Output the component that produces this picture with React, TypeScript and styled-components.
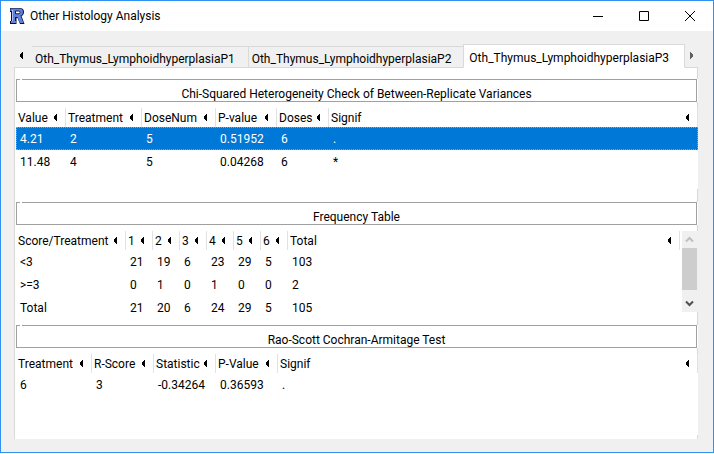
import React from "react";
import styled, { createGlobalStyle } from "styled-components";

const GlobalStyle = createGlobalStyle`
  *, *::before, *::after { box-sizing: border-box; }
  body { margin: 0; background: #ffffff; }
  button {
    font: inherit;
    color: inherit;
    background: none;
    border: 0;
    padding: 0;
    margin: 0;
  }
`;

const Window = styled.main`
  display: flex;
  flex-direction: column;
  min-height: calc(100vh - 1px);
  border: 1px solid #2f91f0;
  background: #f0f0f0;
  color: #000000;
  font-family: Roboto, "Noto Sans", sans-serif;
  font-size: 12px;
  line-height: 16px;
`;

const TitleBar = styled.header`
  display: flex;
  align-items: center;
  height: 30px;
  padding-left: 8px;
  background: #ffffff;
`;

const WindowTitle = styled.h1`
  flex: 1;
  margin: 0 0 0 5px;
  font-size: 12px;
  font-weight: 400;
  line-height: 16px;
`;

const WindowButton = styled.button`
  display: flex;
  align-items: center;
  justify-content: center;
  width: 46px;
  height: 30px;
`;

const Content = styled.div`
  display: flex;
  flex: 1;
  flex-direction: column;
  padding: 13px 15px 13px 13px;
`;

const TabStrip = styled.div`
  display: flex;
  align-items: flex-end;
`;

const TabScroll = styled.button<{ $side: "left" | "right" }>`
  display: flex;
  align-items: center;
  justify-content: ${(p) => (p.$side === "left" ? "flex-start" : "flex-end")};
  flex: ${(p) => (p.$side === "left" ? "0 0 18px" : "1 0 12px")};
  height: 24px;
  padding: ${(p) => (p.$side === "left" ? "0 6px 0 6px" : "0 5px")};
  border-bottom: 1px solid #d9d9d9;
`;

const Tab = styled.button<{ $active?: boolean }>`
  flex: 0 1 ${(p) => (p.$active ? 222 : 216)}px;
  height: ${(p) => (p.$active ? 24 : 22)}px;
  padding: ${(p) => (p.$active ? "4px 0 0 5px" : "3px 0 0 3px")};
  border: 1px solid #d9d9d9;
  border-left-width: ${(p) => (p.$active ? 1 : 0)}px;
  border-right-width: ${(p) => (p.$active ? 1 : 0)}px;
  border-bottom-color: ${(p) => (p.$active ? "#ffffff" : "#d9d9d9")};
  background: ${(p) => (p.$active ? "#ffffff" : "#f0f0f0")};
  line-height: 16px;
  text-align: left;
  white-space: nowrap;

  & + & {
    border-left-width: 1px;
  }
`;

const Panel = styled.section`
  display: flex;
  flex: 1;
  flex-direction: column;
  gap: 13px;
  padding: 11px 0 4px 1px;
  border: solid #d9d9d9;
  border-width: 0 1px;
  background: #ffffff;
`;

const Group = styled.section`
  display: flex;
  flex-direction: column;
  gap: 6px;
`;

const GroupTitle = styled.h2`
  height: 23px;
  margin: 0;
  border: 1px solid #a0a0a0;
  box-shadow: 1px 0 0 #ffffff;
  font-size: 12px;
  font-weight: 400;
  line-height: 28px;
  text-align: center;

  &::before {
    content: "";
    display: block;
    width: 2px;
    height: 1px;
    margin: -1px 0 0 3px;
    background: #ffffff;
  }
`;

const ListView = styled.div`
  display: flex;
  gap: 2px;
  height: 81px;
  margin-right: -1px;
  background: #ffffff;
`;

const Grid = styled.table`
  flex: 1;
  width: 100%;
  height: min-content;
  table-layout: fixed;
  border-collapse: separate;
  border-spacing: 0;
`;

const HeadCell = styled.th`
  height: 19px;
  padding: 0;
  border-right: 1px solid #e2e2e2;
  font-weight: 400;
`;

const SortButton = styled.button`
  display: flex;
  align-items: center;
  justify-content: space-between;
  width: 100%;
  height: 19px;
  padding: 0 8px 0 2px;
  white-space: nowrap;
`;

const Row = styled.tr<{ $selected?: boolean }>`
  background: ${(p) => (p.$selected ? "#0078d7" : "transparent")};
  color: ${(p) => (p.$selected ? "#ffffff" : "#000000")};
  outline: ${(p) => (p.$selected ? "1px dotted #ff8728" : "none")};
  outline-offset: -1px;
`;

const Cell = styled.td`
  height: 23px;
  padding: 0 0 0 4px;
  white-space: nowrap;
`;

const ScrollBar = styled.div`
  display: flex;
  flex-direction: column;
  flex: 0 0 16px;
  background: #f0f0f0;
`;

const ScrollButton = styled.button`
  display: flex;
  align-items: center;
  justify-content: center;
  width: 15px;
  height: 17px;
`;

const ScrollTrack = styled.div`
  flex: 1;
`;

const ScrollThumb = styled.div`
  width: 15px;
  height: 42px;
  background: #cdcdcd;
`;

const Arrow = ({ flip, color = "#000000" }: { flip?: boolean; color?: string }) => (
  <svg width="3" height="7" viewBox="0 0 3 7" shapeRendering="crispEdges" aria-hidden="true">
    <path
      d={flip ? "M0 0h1v1h1v1h1v3h-1v1h-1v1h-1z" : "M3 0h-1v1h-1v1h-1v3h1v1h1v1h1z"}
      fill={color}
    />
  </svg>
);

const RLogo = () => (
  <svg width="16" height="18" viewBox="0 0 16 18" aria-hidden="true">
    <path
      d="M1 1h9.500c3 0 4.500 1.500 4.500 4c0 2-1 3.500-2.500 4l3 8h-4.500l-2.500-6h-1v6h-6.500v-3h1v-9h-1z"
      fill="#0c1130"
    />
    <path
      d="M1.500 1.500h8.500c2.700 0 4 1.200 4 3.400c0 2-1 3.200-2.600 3.700l3.100 7.400h-3.500l-2.700-6h-2.300v4h1v2h-5v-2h1v-10h-1.500z"
      fill="#5f82dc"
    />
    <path d="M6.500 4h2.500c1.500 0 2 .5 2 1.300s-.5 1.500-2 1.500h-2.500z" fill="#ffffff" stroke="#10163a" strokeWidth="1" />
    <path d="M3.500 3v11" stroke="#a9bdf3" strokeWidth="1" fill="none" />
  </svg>
);

type Column = [label: string, width?: number];

type TableProps = {
  title: string;
  columns: Column[];
  rows: string[][];
  selected?: number;
  scrollable?: boolean;
};

const ResultTable = ({ title, columns, rows, selected, scrollable }: TableProps) => (
  <Group>
    <GroupTitle>{title}</GroupTitle>
    <ListView>
      <Grid aria-label={title}>
        <colgroup>
          {columns.map(([label, width]) => (
            <col key={label} width={width} />
          ))}
        </colgroup>
        <thead>
          <tr>
            {columns.map(([label]) => (
              <HeadCell key={label} scope="col">
                <SortButton type="button">
                  {label}
                  <Arrow />
                </SortButton>
              </HeadCell>
            ))}
          </tr>
        </thead>
        <tbody>
          {rows.map((cells, r) => (
            <Row key={r} $selected={r === selected} aria-selected={r === selected}>
              {cells.map((text, c) => (
                <Cell key={c}>{text}</Cell>
              ))}
            </Row>
          ))}
        </tbody>
      </Grid>
      {scrollable && (
        <ScrollBar>
          <ScrollButton type="button" aria-label="Scroll up">
            <svg width="9" height="7" viewBox="0 0 9 7" aria-hidden="true">
              <path d="M1 5.500L4.500 2L8 5.500" fill="none" stroke="#bfbfbf" strokeWidth="2" />
            </svg>
          </ScrollButton>
          <ScrollTrack>
            <ScrollThumb />
          </ScrollTrack>
          <ScrollButton type="button" aria-label="Scroll down">
            <svg width="9" height="7" viewBox="0 0 9 7" aria-hidden="true">
              <path d="M1 1.500L4.500 5L8 1.500" fill="none" stroke="#505050" strokeWidth="2" />
            </svg>
          </ScrollButton>
        </ScrollBar>
      )}
    </ListView>
  </Group>
);

const tabs = [
  "Oth_Thymus_LymphoidhyperplasiaP1",
  "Oth_Thymus_LymphoidhyperplasiaP2",
  "Oth_Thymus_LymphoidhyperplasiaP3",
];

export default function App() {
  return (
    <>
      <GlobalStyle />
      <Window>
        <TitleBar>
          <RLogo />
          <WindowTitle>Other Histology Analysis</WindowTitle>
          <WindowButton type="button" aria-label="Minimize">
            <svg width="10" height="10" viewBox="0 0 10 10" aria-hidden="true">
              <path d="M0 5.500h10" stroke="#000000" />
            </svg>
          </WindowButton>
          <WindowButton type="button" aria-label="Maximize">
            <svg width="10" height="10" viewBox="0 0 10 10" aria-hidden="true">
              <path d="M0.500 0.500h9v9h-9z" fill="none" stroke="#000000" />
            </svg>
          </WindowButton>
          <WindowButton type="button" aria-label="Close">
            <svg width="10" height="10" viewBox="0 0 10 10" aria-hidden="true">
              <path d="M0 0l10 10M10 0l-10 10" stroke="#000000" />
            </svg>
          </WindowButton>
        </TitleBar>
        <Content>
          <TabStrip role="tablist">
            <TabScroll type="button" $side="left" aria-label="Previous tabs">
              <Arrow />
            </TabScroll>
            {tabs.map((label, i) => (
              <Tab key={label} type="button" role="tab" aria-selected={i === 2} $active={i === 2}>
                {label}
              </Tab>
            ))}
            <TabScroll type="button" $side="right" aria-label="Next tabs">
              <Arrow flip color="#606060" />
            </TabScroll>
          </TabStrip>
          <Panel role="tabpanel">
            <ResultTable
              title="Chi-Squared Heterogeneity Check of Between-Replicate Variances"
              columns={[
                ["Value", 50],
                ["Treatment", 76],
                ["DoseNum", 74],
                ["P-value", 61],
                ["Doses", 52],
                ["Signif"],
              ]}
              rows={[
                ["4.21", "2", "5", "0.51952", "6", "."],
                ["11.48", "4", "5", "0.04268", "6", "*"],
              ]}
              selected={0}
            />
            <ResultTable
              title="Frequency Table"
              columns={[
                ["Score/Treatment", 110],
                ["1", 27],
                ["2", 27],
                ["3", 27],
                ["4", 27],
                ["5", 27],
                ["6", 27],
                ["Total"],
              ]}
              rows={[
                ["<3", "21", "19", "6", "23", "29", "5", "103"],
                [">=3", "0", "1", "0", "1", "0", "0", "2"],
                ["Total", "21", "20", "6", "24", "29", "5", "105"],
              ]}
              scrollable
            />
            <ResultTable
              title="Rao-Scott Cochran-Armitage Test"
              columns={[
                ["Treatment", 76],
                ["R-Score", 62],
                ["Statistic", 62],
                ["P-Value", 62],
                ["Signif"],
              ]}
              rows={[["6", "3", "-0.34264", "0.36593", "."]]}
            />
          </Panel>
        </Content>
      </Window>
    </>
  );
}
